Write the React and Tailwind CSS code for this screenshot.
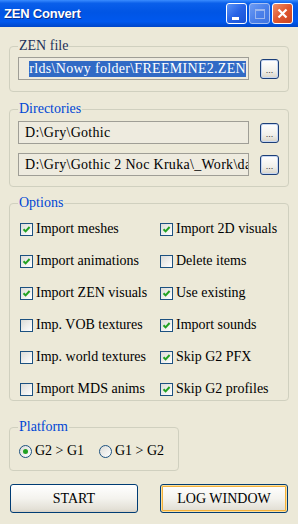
import React from 'react';

function Check({ on, label }) {
  return (
    <div className="flex items-center h-[20px] whitespace-nowrap">
      <span className="w-[13px] h-[13px] shrink-0 border border-[#1C5180] bg-[linear-gradient(135deg,#DCDCD7,#FFFFFF)] flex items-center justify-center">
        {on && (
          <svg width="9" height="9" viewBox="0 0 9 9">
            <path d="M1.5 4.2 L3.6 6.4 L7.6 2" stroke="#21A121" strokeWidth="2" fill="none" />
          </svg>
        )}
      </span>
      <span className="ml-[3px] text-[14px] leading-[16px] text-black">{label}</span>
    </div>
  );
}

function Radio({ on, label }) {
  return (
    <div className="flex items-center h-[20px] whitespace-nowrap">
      <span className="w-[13px] h-[13px] shrink-0 rounded-full border border-[#1C5180] bg-[linear-gradient(135deg,#DCDCD7,#FFFFFF)] flex items-center justify-center">
        {on && <span className="w-[5px] h-[5px] rounded-full bg-[#21A121]" />}
      </span>
      <span className="ml-[3px] text-[14px] leading-[16px] text-black">{label}</span>
    </div>
  );
}

function Browse() {
  return (
    <button className="w-[19px] h-[20px] shrink-0 rounded-[3px] border border-[#1C3F78] bg-[linear-gradient(180deg,#FFFFFF,#F1F0EA_60%,#D8D4C8)] shadow-[inset_0_0_0_1px_#C6D6F2] flex items-end justify-center pb-[3px]">
      <span className="text-[9px] leading-none text-[#333] font-['Liberation_Sans',sans-serif]">...</span>
    </button>
  );
}

function Field({ children, selected }) {
  return (
    <div className="w-[231px] h-[23px] border border-[#9F9E96] bg-[#EEEBDF] flex items-center overflow-hidden pl-[6px] pr-[2px]">
      {selected ? (
        <div className="flex-1 flex justify-end overflow-hidden">
          <span className="bg-[#316AC5] text-white text-[14px] leading-[16px] tracking-[0.3px] whitespace-nowrap">{children}</span>
        </div>
      ) : (
        <span className="text-[14px] leading-[16px] tracking-[0.3px] text-black whitespace-nowrap">{children}</span>
      )}
    </div>
  );
}

function Group({ title, dark, className, children }) {
  return (
    <fieldset className={`border border-[#D0D0BF] rounded-[4px] px-[8px] ${className}`}>
      <legend className={`px-[1px] text-[14px] leading-[16px] ${dark ? 'text-[#22315A]' : 'text-[#0046D5]'}`}>{title}</legend>
      {children}
    </fieldset>
  );
}

export default function App() {
  return (
    <div className="w-[298px] h-[524px] bg-[#ECE9D8] font-['Liberation_Serif',serif] flex flex-col overflow-hidden">
      <div className="h-[27px] shrink-0 flex items-center justify-between bg-[linear-gradient(180deg,#3A8CFF_0%,#0A5FEA_12%,#0055E5_45%,#0058EE_80%,#0046C8_100%)]">
        <span className="ml-[4px] text-white font-bold text-[13px] font-['Liberation_Sans',sans-serif] tracking-[-0.2px] [text-shadow:1px_1px_0_#0A2E8A]">ZEN Convert</span>
        <div className="flex gap-[2px] mr-[5px]">
          <div className="w-[21px] h-[21px] rounded-[3px] border border-white bg-[linear-gradient(135deg,#5A93F7,#2763E6_50%,#1A52D5)] relative">
            <span className="absolute left-[5px] top-[13px] w-[7px] h-[3px] bg-white" />
          </div>
          <div className="w-[21px] h-[21px] rounded-[3px] border border-[#A7C0F3] bg-[linear-gradient(135deg,#6D9CF4,#4B80EA_50%,#3F74E2)] flex items-center justify-center">
            <span className="w-[10px] h-[10px] border border-[#9BB6EE] border-t-[2px]" />
          </div>
          <div className="w-[21px] h-[21px] rounded-[3px] border border-white bg-[linear-gradient(135deg,#F0906A,#E0572E_50%,#C94422)] flex items-center justify-center">
            <svg width="11" height="11" viewBox="0 0 11 11">
              <path d="M1.5 1.5 L9.5 9.5 M9.5 1.5 L1.5 9.5" stroke="white" strokeWidth="2.2" />
            </svg>
          </div>
        </div>
      </div>

      <div className="flex-1 px-[9px] flex flex-col">
        <Group title="ZEN file" dark className="mt-[11px] pt-[3px] pb-[11px]">
          <div className="flex items-center gap-[11px]">
            <Field selected>rlds\Nowy folder\FREEMINE2.ZEN</Field>
            <Browse />
          </div>
        </Group>

        <Group title="Directories" className="mt-[9px] pt-[4px] pb-[10px]">
          <div className="flex flex-col gap-[9px]">
            <div className="flex items-center gap-[11px]">
              <Field>D:\Gry\Gothic</Field>
              <Browse />
            </div>
            <div className="flex items-center gap-[11px]">
              <Field>D:\Gry\Gothic 2 Noc Kruka\_Work\data</Field>
              <Browse />
            </div>
          </div>
        </Group>

        <Group title="Options" className="mt-[8px] pt-[8px] pb-[1px]">
          <div className="grid grid-cols-[140px_1fr] gap-y-[12px] pl-[2px]">
            <Check on label="Import meshes" />
            <Check on label="Import 2D visuals" />
            <Check on label="Import animations" />
            <Check label="Delete items" />
            <Check on label="Import ZEN visuals" />
            <Check on label="Use existing" />
            <Check label="Imp. VOB textures" />
            <Check on label="Import sounds" />
            <Check label="Imp. world textures" />
            <Check on label="Skip G2 PFX" />
            <Check label="Import MDS anims" />
            <Check on label="Skip G2 profiles" />
          </div>
        </Group>

        <Group title="Platform" className="mt-[18px] pt-[6px] pb-[9px] w-[170px]">
          <div className="flex items-center pl-[1px]">
            <div className="w-[80px]">
              <Radio on label="G2 > G1" />
            </div>
            <Radio label="G1 > G2" />
          </div>
        </Group>

        <div className="mt-[13px] flex pl-[1px] gap-[22px]">
          <button className="w-[128px] h-[29px] rounded-[3px] border border-[#003C74] bg-[linear-gradient(180deg,#FFFFFF,#F4F3EE_50%,#E3E0D6_90%,#D6D0C5)] text-[14px] text-black">
            START
          </button>
          <button className="w-[128px] h-[29px] rounded-[3px] border border-[#003C74] bg-[linear-gradient(180deg,#FFFFFF,#F4F3EE_50%,#E3E0D6_90%,#D6D0C5)] shadow-[inset_0_0_0_1px_#FCE09D,inset_0_0_0_2px_#F2B13C] text-[14px] text-black">
            LOG WINDOW
          </button>
        </div>
      </div>
    </div>
  );
}
